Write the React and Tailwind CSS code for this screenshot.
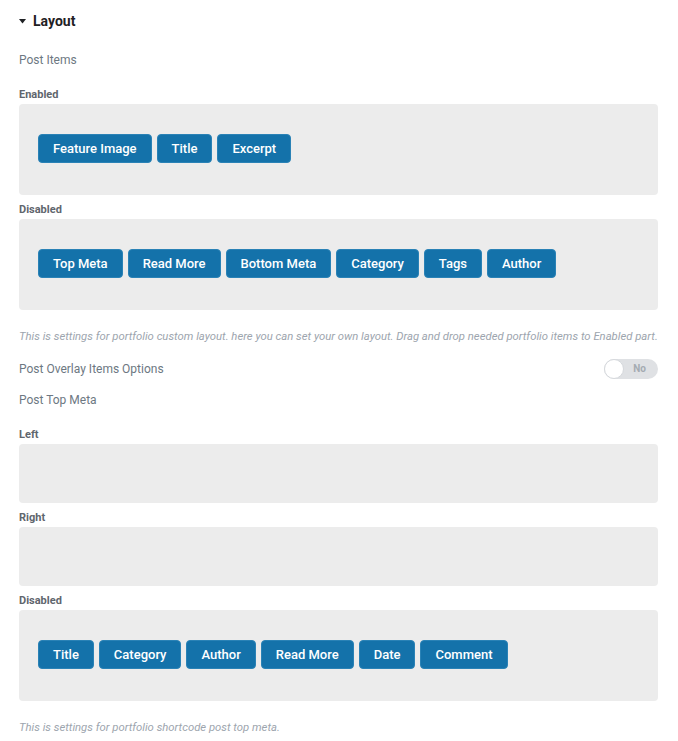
import React, { useState } from "react";

const enabledItems = ["Feature Image", "Title", "Excerpt"];
const disabledItems = ["Top Meta", "Read More", "Bottom Meta", "Category", "Tags", "Author"];
const topMetaDisabled = ["Title", "Category", "Author", "Read More", "Date", "Comment"];

const Chip = ({ label }) => (
  <div className="h-[29px] px-[14px] flex items-center rounded-[4px] border border-[#2a82b6] bg-[#1472aa] text-white text-[13px] font-medium cursor-move select-none">
    {label}
  </div>
);

const SortBox = ({ items = [], tall = true }) => (
  <div
    className={`w-full rounded-[4px] bg-[#ececec] px-[19px] ${
      tall ? "h-[91px] pt-[30px]" : "h-[59px]"
    }`}
  >
    <div className="flex gap-[5px]">
      {items.map((item) => (
        <Chip key={item} label={item} />
      ))}
    </div>
  </div>
);

const SubLabel = ({ children, className = "" }) => (
  <div className={`text-[11px] leading-[14px] font-bold text-[#5f666d] ${className}`}>{children}</div>
);

const Note = ({ children, className = "" }) => (
  <div className={`text-[11.3px] leading-[14px] italic text-[#9da5ae] ${className}`}>{children}</div>
);

const Toggle = () => {
  const [on, setOn] = useState(false);
  return (
    <button
      type="button"
      onClick={() => setOn(!on)}
      className="relative w-[54px] h-[20px] rounded-full bg-[#dfe1e4]"
    >
      <span className="absolute left-0 top-0 w-[20px] h-[20px] rounded-full bg-white border border-[#d5d8dc]" />
      <span className="absolute right-[12px] top-0 leading-[20px] text-[10px] font-bold text-[#a4abb2]">
        {on ? "Yes" : "No"}
      </span>
    </button>
  );
};

export default function App() {
  return (
    <div className="bg-white min-h-[741px] w-[678px] pl-[19px] pr-[20px] pt-[11px] font-['Roboto',sans-serif]">
      {/* section header */}
      <div className="flex items-center h-[20px]">
        <svg width="7" height="5" viewBox="0 0 7 5" className="mr-[7px]">
          <path d="M0 0h7L3.5 4.5z" fill="#1f2124" />
        </svg>
        <span className="text-[14px] font-bold text-[#1f2124]">Layout</span>
      </div>

      <div className="mt-[21px] text-[12px] leading-[16px] text-[#6d7882]">Post Items</div>

      <SubLabel className="mt-[20px] mb-[2px]">Enabled</SubLabel>
      <SortBox items={enabledItems} />

      <SubLabel className="mt-[8px] mb-[2px]">Disabled</SubLabel>
      <SortBox items={disabledItems} />

      <Note className="mt-[20px]">
        This is settings for portfolio custom layout. here you can set your own layout. Drag and drop needed
        portfolio items to Enabled part.
      </Note>

      <div className="mt-[15px] flex items-center justify-between h-[20px]">
        <span className="text-[12px] text-[#6d7882]">Post Overlay Items Options</span>
        <Toggle />
      </div>

      <div className="mt-[13px] text-[12px] leading-[16px] text-[#6d7882]">Post Top Meta</div>

      <SubLabel className="mt-[20px] mb-[2px]">Left</SubLabel>
      <SortBox tall={false} />

      <SubLabel className="mt-[8px] mb-[2px]">Right</SubLabel>
      <SortBox tall={false} />

      <SubLabel className="mt-[8px] mb-[2px]">Disabled</SubLabel>
      <SortBox items={topMetaDisabled} />

      <Note className="mt-[20px]">This is settings for portfolio shortcode post top meta.</Note>
    </div>
  );
}
